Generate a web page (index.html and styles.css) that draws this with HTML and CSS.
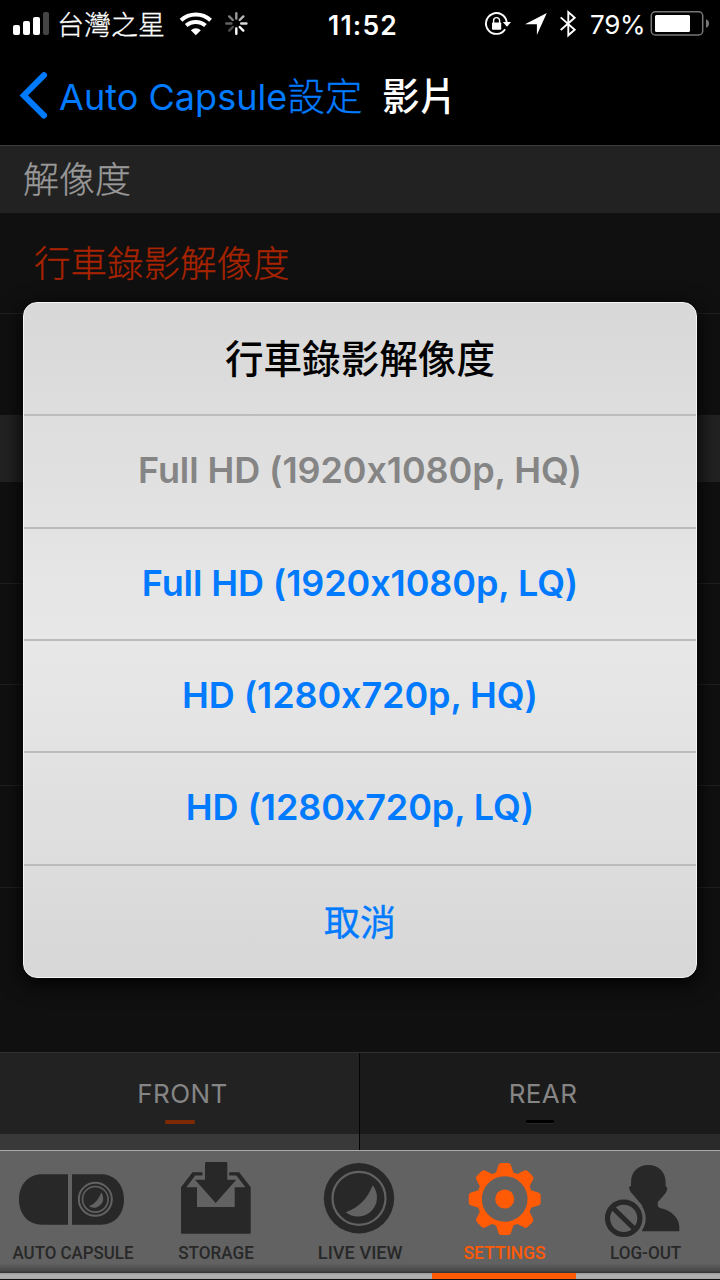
FILE: index.html
```html
<!DOCTYPE html>
<html lang="zh-Hant">
<head>
<meta charset="utf-8">
<title>影片</title>
<link rel="stylesheet" href="styles.css">
</head>
<body>
<div class="screen">
  <header class="status">
    <svg class="signal" width="38" height="48" viewBox="12 0 38 48"><g fill="#fff"><rect x="13" y="25" width="7" height="10" rx="2"/><rect x="23" y="21" width="7" height="14" rx="2"/><rect x="33" y="17" width="7" height="18" rx="2"/><rect x="43" y="12" width="6" height="23" rx="2" fill="#444"/></g></svg>
    <span class="carrier">台灣之星</span>
    <svg class="wifi" width="74" height="48" viewBox="176 0 74 48">
      <g fill="none" stroke="#fff" stroke-width="4"><path d="M181 20.2a22 22 0 0 1 29.6 0M186.2 25.6a14.3 14.3 0 0 1 19.2 0"/></g><path d="M190.8 30.2a7.5 7.5 0 0 1 10 0L195.8 35.2z" fill="#fff"/>
      <g stroke="#fff" stroke-width="2.4" stroke-linecap="round"><path d="M236.3 28.5v5.3"/><path d="M239.7 27l3.6 3.6" /><path d="M241.2 23.5h5.2" opacity=".85"/><path d="M239.7 20l3.6-3.6" opacity=".72"/><path d="M236.3 18.5v-5.2" opacity=".6"/><path d="M232.8 20l-3.6-3.6" opacity=".5"/><path d="M231.3 23.5h-5" opacity=".38"/><path d="M232.8 27l-3.6 3.6" opacity=".3"/></g>
    </svg>
    <span class="clock">11:52</span>
    <svg class="indicators" width="98" height="48" viewBox="484 0 98 48">
      <path d="M505.1 29.2a10.4 10.4 0 1 1 1.6-7.1" fill="none" stroke="#fff" stroke-width="1.9"/><path d="M502.8 22h8.2l-4 4.8z" fill="#fff"/><rect x="492" y="22.4" width="9.2" height="7.3" rx=".8" fill="#fff"/><path d="M493.6 23v-2.4a3 3 0 0 1 6 0V23" fill="none" stroke="#fff" stroke-width="1.4"/>
      <path d="M525 24.2L546.8 13l-9.9 22v-10.8z" fill="#fff"/>
      <path d="M560.7 17.4l14 12.3-6.4 5.6V12l6.4 5.7-14 12.3" fill="none" stroke="#fff" stroke-width="1.9"/>
    </svg>
    <span class="percent">79%</span>
    <svg class="battery" width="62" height="48" viewBox="648 0 62 48"><rect x="651.3" y="11.8" width="51.4" height="23.2" rx="4" fill="none" stroke="#777" stroke-width="1.5"/><rect x="655" y="15" width="35" height="17" rx="1.5" fill="#fff"/><path d="M706 19.2q3 1 3 4.3t-3 4.3z" fill="#777"/></svg>
  </header>
  <nav class="nav">
    <svg class="chevron" width="30" height="50" viewBox="18 71.500 30 50"><path d="M44 75.700L23.800 96 44 116" fill="none" stroke="#007aff" stroke-width="6" stroke-linecap="round"/></svg>
    <a class="back"><span class="back-latin">Auto Capsule</span><span class="back-han">設定</span></a>
    <h1 class="page-title">影片</h1>
  </nav>
  <main class="content">
    <h2 class="section">解像度</h2>
    <div class="row first"><span>行車錄影解像度</span></div>
    <div class="row second"></div>
    <div class="section"></div>
    <div class="row tall"></div>
    <div class="row"></div>
    <div class="row"></div>
    <div class="row tall"></div>
  </main>
  <div class="cameras">
    <div class="camera front"><span>FRONT</span><i></i></div>
    <div class="camera rear"><span>REAR</span><i></i></div>
  </div>
  <footer class="tabs">
    <div class="tab">
      <svg width="144" height="90" viewBox="0 1151 144 90"><path d="M68 1174.3v50.4H42C28 1224.7 19 1214 19 1199.5S28 1174.3 42 1174.3zM72 1174.3h29c14 0 23 10.700 23 25.200s-9 25.200-23 25.200H72z" fill="#282828"/><g fill="none" stroke="#626262"><circle cx="95.300" cy="1199.300" r="16.500" stroke-width="2"/><circle cx="95.300" cy="1199.300" r="12.800" stroke-width="1.600"/></g><path d="M101.200 1192.600Q97.500 1203.300 89 1206.300A9.300 9.300 0 0 0 101.200 1192.600z" fill="#626262"/></svg>
      <span class="label l1">AUTO CAPSULE</span>
    </div>
    <div class="tab">
      <svg width="144" height="90" viewBox="144 1151 144 90"><g fill="#282828"><path d="M205.800 1162h20.500a1 1 0 0 1 1 1v16.700h9L215.700 1203 195 1179.700h10V1163z"/><path d="M181 1187.300h16v19.700h37.700v-19.700h16v45.400a1 1 0 0 1-1 1H182a1 1 0 0 1-1-1zM181 1187.300l11.500-15h10v3.100h-7.200l-9 11.900zM250.700 1187.300l-11.500-15h-10v3.100h7.200l9 11.900z"/></g></svg>
      <span class="label l2">STORAGE</span>
    </div>
    <div class="tab">
      <svg width="144" height="90" viewBox="288 1151 144 90"><circle cx="359" cy="1198.300" r="35.200" fill="#282828"/><circle cx="359" cy="1198.300" r="26.500" fill="none" stroke="#626262" stroke-width="2.200"/><path d="M372.700 1185.300Q365 1205.500 345.700 1212.300A19.200 19.200 0 0 0 372.700 1185.300z" fill="#626262"/></svg>
      <span class="label l3">LIVE VIEW</span>
    </div>
    <div class="tab active">
      <svg width="144" height="90" viewBox="432 1151 144 90">
        <defs><path id="tooth" d="M495.700 1173.500L498.300 1165.500Q498.800 1163 501.200 1163h7q2.400 0 2.900 2.500l2.600 8z"/></defs>
        <g fill="#ff5a05"><use href="#tooth"/><use href="#tooth" transform="rotate(45 504.700 1199)"/><use href="#tooth" transform="rotate(90 504.700 1199)"/><use href="#tooth" transform="rotate(135 504.700 1199)"/><use href="#tooth" transform="rotate(180 504.700 1199)"/><use href="#tooth" transform="rotate(225 504.700 1199)"/><use href="#tooth" transform="rotate(270 504.700 1199)"/><use href="#tooth" transform="rotate(315 504.700 1199)"/><circle cx="504.700" cy="1199" r="9.500"/></g>
        <circle cx="504.700" cy="1199" r="25.300" fill="none" stroke="#ff5a05" stroke-width="5"/>
      </svg>
      <span class="label l4">SETTINGS</span>
    </div>
    <div class="tab">
      <svg width="144" height="90" viewBox="576 1151 144 90"><path d="M631 1186v-4c0-10 7-17 17.300-17s17.300 7 17.300 17v4l1.700 1.700c-.3 3-1.300 5.500-3.300 7.300l-6.300 7.300v2.500c0 3 2 3.200 5.300 4 8 2 16.300 9.200 16.300 18.200v4.300H642v-26l-9.300-11c-2-1.800-3.400-4.300-3.700-7.300z" fill="#282828"/><circle cx="623.700" cy="1218.300" r="22" fill="#626262"/><circle cx="623.700" cy="1218.300" r="16.200" fill="none" stroke="#282828" stroke-width="5.200"/><path d="M613 1208l21.500 21" stroke="#282828" stroke-width="5"/></svg>
      <span class="label l5">LOG-OUT</span>
    </div>
  </footer>
  <div class="underline"><i></i></div>
  <section class="dialog" role="dialog">
    <h3>行車錄影解像度</h3>
    <button class="muted">Full HD (1920x1080p, HQ)</button>
    <button>Full HD (1920x1080p, LQ)</button>
    <button>HD (1280x720p, HQ)</button>
    <button>HD (1280x720p, LQ)</button>
    <button class="cancel">取消</button>
  </section>
</div>
</body>
</html>
```

FILE: styles.css
```css
* { box-sizing: border-box; }
body { margin: 0; background: #000; font-family: Inter, "Noto Sans CJK TC", sans-serif; }
h1, h2, h3 { margin: 0; font-weight: 400; }
svg { display: block; flex: none; }
.screen { position: relative; width: 720px; height: 1280px; overflow: hidden; display: flex; flex-direction: column; background: #101010; white-space: nowrap; }
.status { height: 48px; flex: none; display: flex; align-items: center; background: #000; color: #fff; padding-left: 12px; }
.carrier { width: 119px; margin-left: 7px; font: 300 27px/48px "Noto Sans CJK TC", sans-serif; -webkit-text-stroke: .3px; }
.wifi { margin-right: 78px; }
.clock { width: 156px; font-size: 26.500px; font-weight: 600; letter-spacing: 1.2px; line-height: 48px; padding-top: 1px; }
.percent { width: 58px; margin-left: 8px; font-size: 26px; letter-spacing: -.3px; }
.battery { margin-left: 0; }
.nav { height: 97px; flex: none; display: flex; align-items: center; background: #000; padding-left: 18px; }
.chevron { margin-bottom: 1px; }
.back { display: flex; align-items: center; width: 323px; margin-left: 11px; color: #007aff; }
.back-latin { font-size: 36px; letter-spacing: .05px; }
.back-han { font: 300 37.500px/54px "Noto Sans CJK TC", sans-serif; padding-bottom: 5px; -webkit-text-stroke: .3px; }
.page-title { color: #fff; font: 500 37.500px/54px "Noto Sans CJK TC", sans-serif; padding-bottom: 5px; }
.content { height: 907px; flex: none; background: #101010; }
.section { height: 68px; padding-left: 23px; background: #222; color: #999; font: 300 36px/63px "Noto Sans CJK TC", sans-serif; border-top: 1px solid #3c3c3c; -webkit-text-stroke: .3px; }
div.section { height: 67px; border-top-color: #242424; }
.row { height: 101px; border-bottom: 1px solid #202020; }
.row.second { border-bottom: 0; }
.row.tall { height: 102px; }
.row.first { padding-left: 34px; color: #a82300; font: 300 36.500px/97px "Noto Sans CJK TC", sans-serif; -webkit-text-stroke: .3px; }
.cameras { display: flex; height: 98px; flex: none; border-top: 1px solid #303030; }
.camera { width: 360px; display: flex; flex-direction: column; align-items: center; padding: 24px 0 0 6px; background: linear-gradient(#1a1a1a 81px, #2a2a2a 81px); color: #858585; font-size: 26px; line-height: 34px; letter-spacing: .4px; }
.camera.front { background: linear-gradient(#222 81px, #393939 81px); border-right: 1px solid #050505; }
.camera i { width: 28px; height: 4px; margin-top: 9px; margin-right: 6px; border-radius: 1px; background: #000; border-bottom: 1px solid #292929; }
.camera.front i { width: 30px; background: #7d2906; border-bottom: 0; }
.tabs { height: 123px; flex: none; display: flex; border-top: 1px solid #aaa; background: linear-gradient(#626262 0, #626262 92%, #484848 98%, #333 100%); color: #282828; }
.tab { width: 144px; display: flex; flex-direction: column; align-items: center; }
.label { font: 500 19px/24px Roboto, sans-serif; }
.l1 { transform: translateX(1px) scaleX(.889); }
.l2 { transform: scaleX(.9); }
.l3 { transform: scaleX(.958); }
.l4 { transform: translateX(1px) scaleX(.923); }
.l5 { transform: translateX(-2px) scaleX(.9); }
.active { color: #ff5a05; }
.underline { height: 6px; background: linear-gradient(#999, #b0b0b0 40%, #aaa); flex: none; border-bottom: 0; }
.underline i { display: block; width: 144px; height: 6px; margin-left: 432px; background: #ff5a05; }
.dialog { position: absolute; left: 23px; top: 302px; width: 674px; height: 676px; padding: 0; border: 1px solid #f4f4f4; border-radius: 14px; overflow: hidden; background: linear-gradient(#d8d8d8, #e8e8e8 50%, #d7d7d7); box-shadow: 0 5px 22px #000; display: grid; grid-template-rows: 113px 113px 112px 112px 113px 1fr; }
.dialog h3 { text-align: center; font-weight: 500; font-size: 38.600px; line-height: 112px; border-bottom: 2px solid #bcbcbc; color: #000; }
.dialog button { background: none; border: 0; border-bottom: 2px solid #bcbcbc; padding: 0 0 3px; color: #007aff; font: 600 36px/106px Inter, "Noto Sans CJK TC", sans-serif; font-feature-settings: "calt" 0; letter-spacing: -.1px; }
.dialog .muted { color: #858585; }
.dialog .cancel { border: 0; padding: 3px 0 0; font-weight: 400; font-size: 36px; letter-spacing: 0; -webkit-text-stroke: .3px; }
```
